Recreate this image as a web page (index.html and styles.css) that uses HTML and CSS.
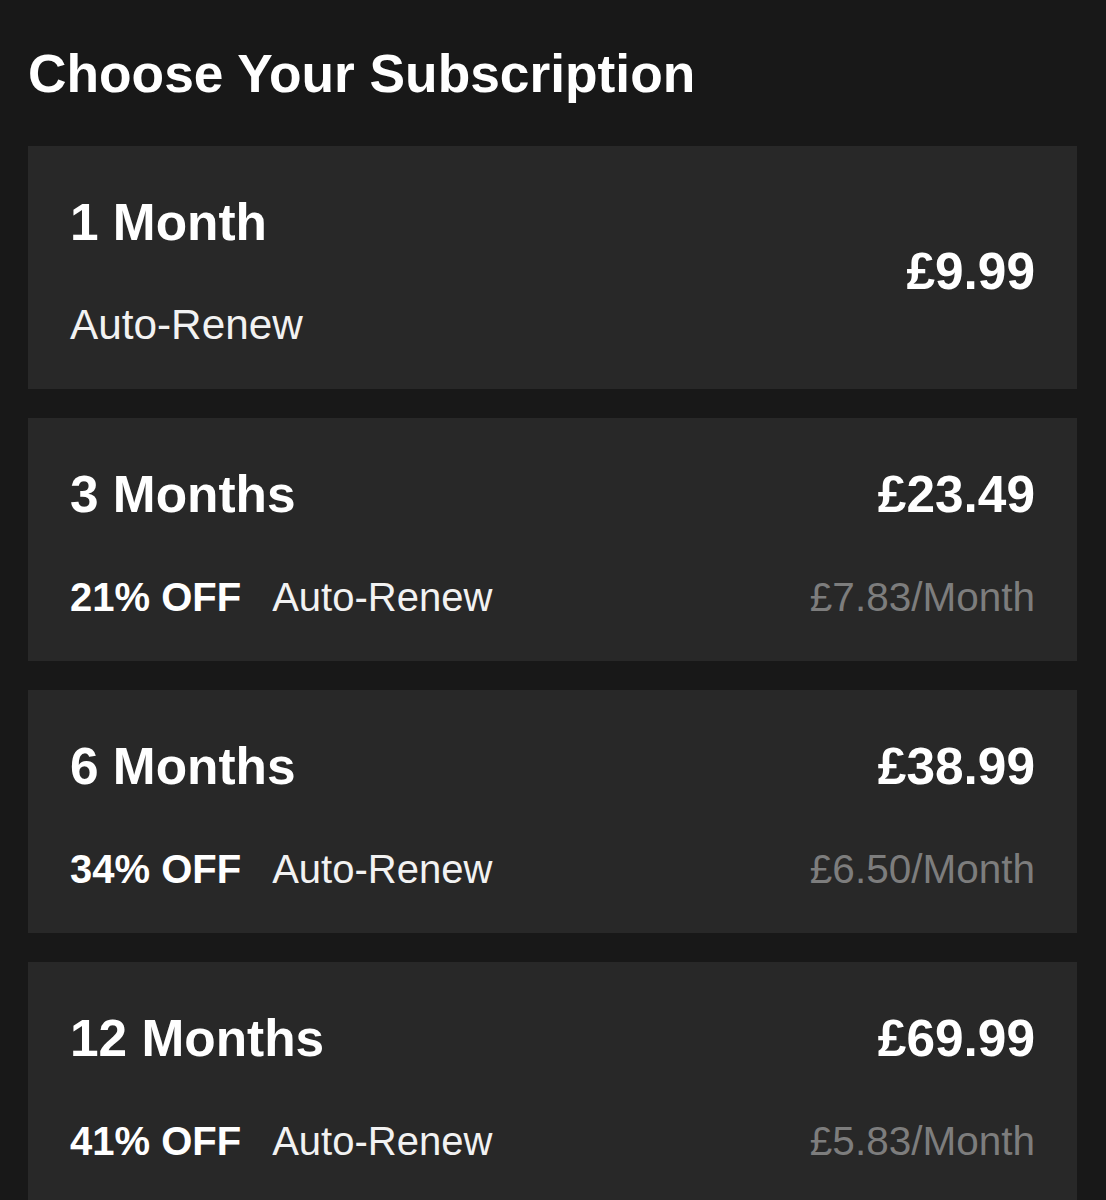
FILE: index.html
```html
<!DOCTYPE html>
<html lang="en">
<head>
  <meta charset="UTF-8" />
  <meta name="viewport" content="width=device-width, initial-scale=1.0"/>
  <title>Choose Your Subscription</title>
  <link rel="stylesheet" href="styles.css">
</head>
<body>
  <div class="page">
    <h1 class="title">Choose Your Subscription</h1>

    <div class="plans">
      <div class="plan">
        <div class="plan-name">1 Month</div>
        <div class="plan-price single">£9.99</div>
        <div class="plan-meta">
          <span class="renew large">Auto-Renew</span>
        </div>
      </div>

      <div class="plan">
        <div class="plan-name">3 Months</div>
        <div class="plan-price">£23.49</div>
        <div class="plan-meta">
          <span class="off">21% OFF</span>
          <span class="renew">Auto-Renew</span>
        </div>
        <div class="per-month">£7.83/Month</div>
      </div>

      <div class="plan">
        <div class="plan-name">6 Months</div>
        <div class="plan-price">£38.99</div>
        <div class="plan-meta">
          <span class="off">34% OFF</span>
          <span class="renew">Auto-Renew</span>
        </div>
        <div class="per-month">£6.50/Month</div>
      </div>

      <div class="plan">
        <div class="plan-name">12 Months</div>
        <div class="plan-price">£69.99</div>
        <div class="plan-meta">
          <span class="off">41% OFF</span>
          <span class="renew">Auto-Renew</span>
        </div>
        <div class="per-month">£5.83/Month</div>
      </div>
    </div>
  </div>
</body>
</html>
```

FILE: styles.css
```css
html, body {
  margin: 0;
  background: #181818;
}
body {
  font-family: "Liberation Sans", Arial, Helvetica, sans-serif;
  color: #fff;
}
.page {
  padding: 44px 29px 0 28px;
}
.title {
  margin: 0 0 42px 0;
  font-size: 53.3px;
  line-height: 60px;
  font-weight: bold;
}
.plans {
  display: flex;
  flex-direction: column;
  gap: 29px;
}
.plan {
  background: #282828;
  padding: 41px 42px 34px 42px;
  display: grid;
  grid-template-columns: 1fr auto;
  grid-template-rows: 70px 60px;
  row-gap: 38px;
}
.plan-name {
  font-size: 51.4px;
  line-height: 70px;
  font-weight: bold;
}
.plan-price {
  font-size: 51.4px;
  line-height: 70px;
  font-weight: bold;
  text-align: right;
}
.plan-price.single {
  grid-row: 1 / span 2;
  grid-column: 2;
  align-self: center;
}
.plan-meta {
  display: flex;
  align-items: baseline;
  gap: 31px;
  line-height: 60px;
}
.off {
  font-size: 40px;
  font-weight: bold;
}
.renew {
  font-size: 40px;
  color: #f2f2f2;
}
.renew.large {
  font-size: 42.3px;
}
.per-month {
  font-size: 40.5px;
  line-height: 60px;
  color: #7d7d7d;
  text-align: right;
}
```
